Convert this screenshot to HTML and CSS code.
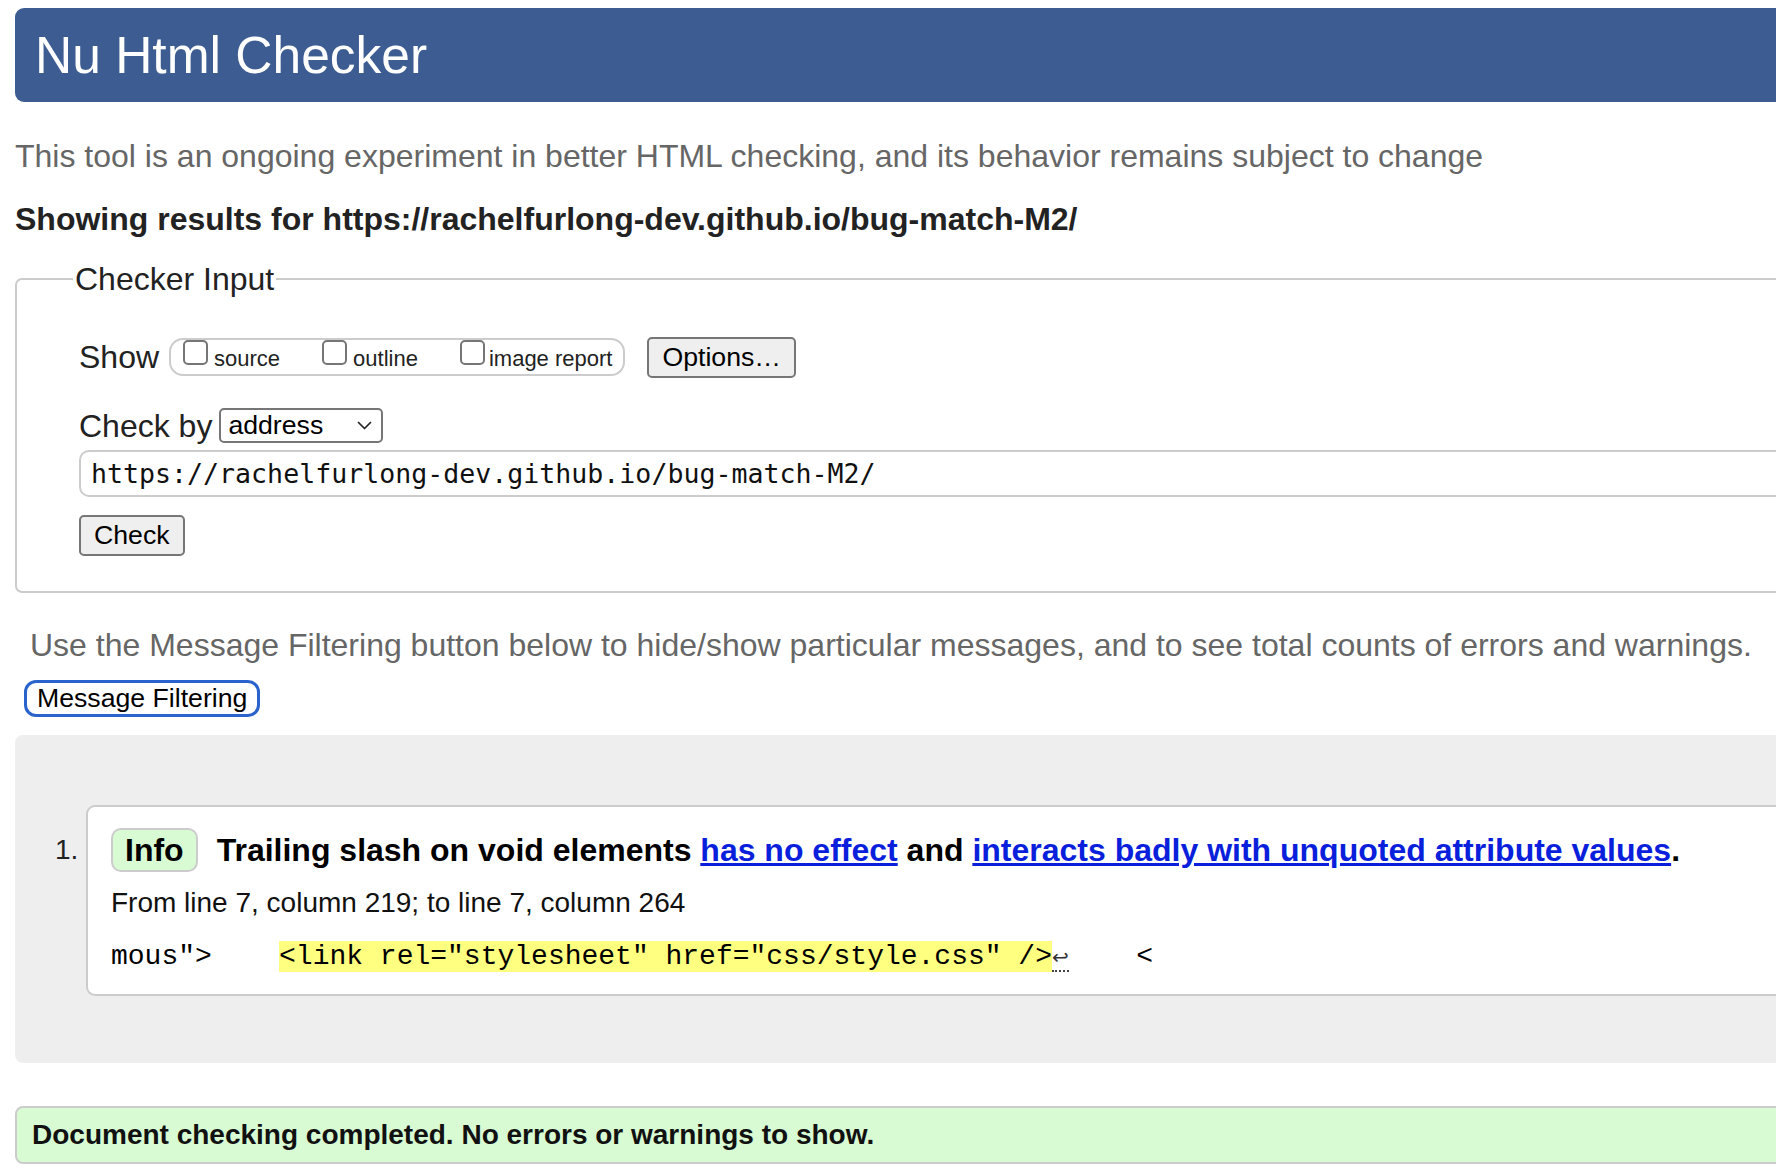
FILE: index.html
```html
<!DOCTYPE html>
<html lang="en">
<head>
<meta charset="utf-8">
<title>Nu Html Checker</title>
<link rel="stylesheet" href="styles.css">
</head>
<body>
<div class="page">
  <h1 class="masthead">Nu Html Checker</h1>
  <p class="intro">This tool is an ongoing experiment in better HTML checking, and its behavior remains subject to change</p>
  <p class="showing">Showing results for https://rachelfurlong-dev.github.io/bug-match-M2/</p>

  <fieldset class="checker">
    <legend>Checker Input</legend>
    <div class="row show-row">
      <span class="label">Show</span>
      <span class="opts">
        <label class="opt"><input type="checkbox" class="cb"><span class="opt-text">source</span></label>
        <label class="opt"><input type="checkbox" class="cb"><span class="opt-text">outline</span></label>
        <label class="opt"><input type="checkbox" class="cb"><span class="opt-text">image report</span></label>
      </span>
      <button class="btn options" type="button">Options…</button>
    </div>
    <div class="row checkby-row">
      <span class="label">Check by</span>
      <span class="select">
        <span>address</span>
        <svg class="chev" width="15" height="9" viewBox="0 0 15 9"><polyline points="1.5,1.5 7.5,7.5 13.5,1.5" fill="none" stroke="#222" stroke-width="1.7" stroke-linecap="round" stroke-linejoin="round"/></svg>
      </span>
    </div>
    <input class="url" type="text" value="https://rachelfurlong-dev.github.io/bug-match-M2/">
    <button class="btn check" type="button">Check</button>
  </fieldset>

  <p class="note">Use the Message Filtering button below to hide/show particular messages, and to see total counts of errors and warnings.</p>
  <button class="filter-btn" type="button">Message Filtering</button>

  <div class="results">
    <ol class="messages">
      <li class="message">
        <span class="num">1.</span>
        <div class="card">
          <p class="msg-title"><span class="badge">Info</span><span>Trailing slash on void elements <a href="#">has no effect</a> and <a href="#">interacts badly with unquoted attribute values</a>.</span></p>
          <p class="location">From line 7, column 219; to line 7, column 264</p>
          <p class="extract"><code>mous"&gt;    <b class="hl">&lt;link rel="stylesheet" href="css/style.css" /&gt;</b><span class="lf">↩</span>    &lt;</code></p>
        </div>
      </li>
    </ol>
  </div>

  <p class="success">Document checking completed. No errors or warnings to show.</p>
</div>
</body>
</html>
```

FILE: styles.css
```css
* { box-sizing: border-box; }

html, body {
  margin: 0;
  padding: 0;
  overflow: hidden;
  background: #fff;
}

body {
  font-family: "Liberation Sans", Arial, Helvetica, sans-serif;
  color: #222;
}

.page {
  width: 2000px;
  padding-left: 15px;
}

.masthead {
  margin: 8px 0 0;
  height: 94px;
  display: flex;
  align-items: center;
  padding-left: 20px;
  background: #3d5d92;
  color: #fff;
  font-size: 51.5px;
  font-weight: normal;
  border-radius: 9px;
}

.intro {
  margin: 36px 0 0;
  font-size: 32px;
  line-height: 36px;
  color: #666;
}

.showing {
  margin: 27px 0 0;
  font-size: 32px;
  line-height: 36px;
  font-weight: bold;
  color: #222;
}

.checker {
  margin: 24px 0 0;
  border: 2px solid #ccc;
  border-radius: 7px;
  padding: 39px 0 35px 62px;
  min-width: 0;
}

.checker legend {
  font-size: 32px;
  line-height: 36px;
  padding: 0 2px;
  margin-left: -6px;
  color: #222;
}

.row {
  display: flex;
  align-items: center;
}

.show-row { height: 42px; }

.label {
  font-size: 32px;
  line-height: 36px;
  color: #222;
}

.opts {
  display: flex;
  align-items: flex-start;
  height: 38px;
  margin-left: 10px;
  padding: 0 11px 0 12px;
  border: 2px solid #ccc;
  border-radius: 14px;
}

.opt {
  display: flex;
  align-items: flex-start;
  margin-right: 42px;
  gap: 6px;
  font-size: 22px;
  color: #222;
}

.opt:last-child { margin-right: 0; gap: 4px; }

.cb {
  appearance: none;
  -webkit-appearance: none;
  margin: 0;
  width: 25px;
  height: 25px;
  border: 2px solid #767676;
  border-radius: 5px;
  background: #fff;
}

.opt-text {
  margin-top: 8px;
  line-height: 22px;
}

.btn {
  font-family: "Liberation Sans", Arial, Helvetica, sans-serif;
  font-size: 26.67px;
  line-height: 1;
  color: #000;
  background: #efefef;
  border: 2px solid #767676;
  border-radius: 5px;
  padding: 0 13px;
  height: 41px;
}

.options { margin-left: 22px; }

.checkby-row {
  margin-top: 29px;
  height: 37px;
}

.select {
  display: flex;
  align-items: center;
  justify-content: space-between;
  width: 164px;
  height: 35px;
  margin-left: 7px;
  padding: 0 9px 0 7px;
  border: 2px solid #767676;
  border-radius: 5px;
  font-size: 26.67px;
  color: #000;
  background: #fff;
}

.chev { display: block; }

.url {
  display: block;
  margin-top: 6px;
  width: 1800px;
  height: 47px;
  border: 2px solid #ccc;
  border-radius: 10px;
  padding: 0 10px;
  font-family: "DejaVu Sans Mono", monospace;
  font-size: 26.6px;
  color: #111;
  background: #fff;
  outline: none;
}

.check {
  display: block;
  margin-top: 18px;
}

.note {
  margin: 34px 0 0 15px;
  font-size: 32px;
  line-height: 36px;
  color: #666;
}

.filter-btn {
  display: block;
  margin: 17px 0 0 9px;
  height: 37px;
  padding: 0 10px;
  border: 3px solid #2b63cc;
  border-radius: 12px;
  background: #fff;
  color: #000;
  font-family: "Liberation Sans", Arial, Helvetica, sans-serif;
  font-size: 26.67px;
  line-height: 1;
}

.results {
  margin-top: 18px;
  background: #eee;
  border-radius: 8px;
  padding: 70px 0 67px 40px;
}

.messages {
  list-style: none;
  margin: 0;
  padding: 0;
}

.message {
  display: flex;
  align-items: flex-start;
}

.num {
  flex: none;
  width: 31px;
  margin-top: 23px;
  font-size: 28px;
  line-height: 44px;
  color: #222;
}

.card {
  flex: 1;
  background: #fff;
  border: 2px solid #ccc;
  border-radius: 9px;
  padding: 21px 0 19px 23px;
}

.msg-title {
  margin: 0;
  font-size: 32px;
  line-height: 44px;
  font-weight: bold;
  color: #000;
}

.badge {
  display: inline-block;
  line-height: 40px;
  padding: 0 12px;
  margin-right: 19px;
  border: 2px solid #ccc;
  border-radius: 10px;
  background: #d9fbd3;
}

.msg-title a {
  color: #0a1fdc;
  text-decoration: underline;
}

.location {
  margin: 15px 0 0;
  font-size: 28px;
  line-height: 32px;
  color: #111;
}

.extract {
  margin: 22px 0 0;
  line-height: 32px;
}

.extract code {
  font-family: "Liberation Mono", "Courier New", monospace;
  font-size: 28px;
  color: #000;
  white-space: pre;
}

.hl {
  font-weight: normal;
  background: #ffff80;
}

.lf {
  display: inline-block;
  width: 17px;
  line-height: 26px;
  font-family: "DejaVu Sans", sans-serif;
  font-size: 20px;
  color: #333;
  border-bottom: 2px dotted #444;
}

.success {
  margin: 43px 0 0;
  height: 58px;
  display: flex;
  align-items: center;
  padding-left: 15px;
  border: 2px solid #ccc;
  border-radius: 8px;
  background: #d9fbd3;
  font-size: 28px;
  font-weight: bold;
  color: #111;
}
```
